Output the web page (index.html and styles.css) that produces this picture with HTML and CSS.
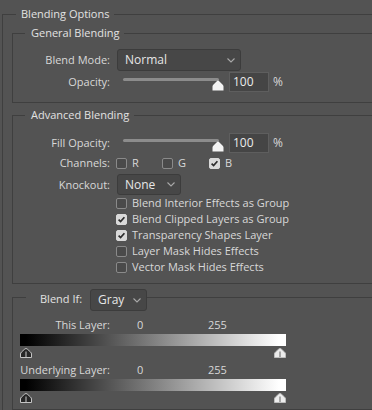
FILE: index.html
```html
<!DOCTYPE html>
<html>
  <head>
    <link rel="stylesheet" href="styles.css">
  </head>
  <body>
    <fieldset class="group outer">
      <legend>Blending Options</legend>

      <fieldset class="group general">
        <legend>General Blending</legend>
        <div class="row row-select">
          <span class="label">Blend Mode:</span>
          <div class="select mode">
            <span>Normal</span>
            <svg class="chev" width="8" height="5" viewBox="0 0 8 5"><path d="M0.5 0.5 L4 4 L7.5 0.5" fill="none" stroke="#a9a9a9" stroke-width="1.1" /></svg>
          </div>
        </div>
        <div class="row row-slider">
          <span class="label">Opacity:</span>
          <div class="slider">
            <div class="track"></div>
            <svg class="thumb" width="12" height="11" viewBox="0 0 12 11"><path d="M0.5 10.5 V6.5 Q0.5 5.5 1.5 4.5 L4.8 1.2 Q6 0 7.2 1.2 L10.5 4.5 Q11.5 5.5 11.5 6.5 V10.5 Z" fill="#f4f4f4" /></svg>
          </div>
          <div class="num">100</div>
          <span class="pct">%</span>
        </div>
      </fieldset>

      <fieldset class="group advanced">
        <legend>Advanced Blending</legend>
        <div class="row row-slider">
          <span class="label">Fill Opacity:</span>
          <div class="slider">
            <div class="track"></div>
            <svg class="thumb" width="12" height="11" viewBox="0 0 12 11"><path d="M0.5 10.5 V6.5 Q0.5 5.5 1.5 4.5 L4.8 1.2 Q6 0 7.2 1.2 L10.5 4.5 Q11.5 5.5 11.5 6.5 V10.5 Z" fill="#f4f4f4" /></svg>
          </div>
          <div class="num">100</div>
          <span class="pct">%</span>
        </div>
        <div class="row row-channels">
          <span class="label">Channels:</span>
          <div class="chan"><span class="box"></span>R</div>
          <div class="chan chan-g"><span class="box"></span>G</div>
          <div class="chan">
            <span class="box checked"><svg width="11" height="11" viewBox="0 0 11 11"><path d="M2.6 5.6 L4.6 7.6 L8.4 3.2" fill="none" stroke="#2c2c2c" stroke-width="1.7" /></svg></span>B
          </div>
        </div>
        <div class="row row-knockout">
          <span class="label">Knockout:</span>
          <div class="select knockout">
            <span>None</span>
            <svg class="chev" width="8" height="5" viewBox="0 0 8 5"><path d="M0.5 0.5 L4 4 L7.5 0.5" fill="none" stroke="#a9a9a9" stroke-width="1.1" /></svg>
          </div>
        </div>
        <div class="check-row"><span class="box"></span>Blend Interior Effects as Group</div>
        <div class="check-row">
          <span class="box checked"><svg width="11" height="11" viewBox="0 0 11 11"><path d="M2.6 5.6 L4.6 7.6 L8.4 3.2" fill="none" stroke="#2c2c2c" stroke-width="1.7" /></svg></span>Blend Clipped Layers as Group
        </div>
        <div class="check-row">
          <span class="box checked"><svg width="11" height="11" viewBox="0 0 11 11"><path d="M2.6 5.6 L4.6 7.6 L8.4 3.2" fill="none" stroke="#2c2c2c" stroke-width="1.7" /></svg></span>Transparency Shapes Layer
        </div>
        <div class="check-row"><span class="box"></span>Layer Mask Hides Effects</div>
        <div class="check-row"><span class="box"></span>Vector Mask Hides Effects</div>
      </fieldset>

      <fieldset class="group blendif">
        <legend>
          <span class="if-label">Blend If:</span>
          <div class="select gray">
            <span>Gray</span>
            <svg class="chev" width="8" height="5" viewBox="0 0 8 5"><path d="M0.5 0.5 L4 4 L7.5 0.5" fill="none" stroke="#a9a9a9" stroke-width="1.1" /></svg>
          </div>
        </legend>

        <div class="range-head">
          <span class="label">This Layer:</span>
          <span class="lo">0</span>
          <span class="hi">255</span>
        </div>
        <div class="ramp"></div>
        <div class="knobs">
          <svg width="12" height="10" viewBox="0 0 12 10"><path d="M0.5 9.5 V6 Q0.5 5 1.5 4 L4.8 1 Q6 0 7.2 1 L10.5 4 Q11.5 5 11.5 6 V9.5 Z" fill="#262626" stroke="#c4c4c4" /><path d="M6 3.5 V9" stroke="#9c9c9c" stroke-width="1.4" /></svg>
          <svg width="12" height="10" viewBox="0 0 12 10"><path d="M0.5 9.5 V6 Q0.5 5 1.5 4 L4.8 1 Q6 0 7.2 1 L10.5 4 Q11.5 5 11.5 6 V9.5 Z" fill="#ececec" stroke="#bdbdbd" /><path d="M6 3.5 V9" stroke="#8a8a8a" stroke-width="1.4" /></svg>
        </div>

        <div class="range-head second">
          <span class="label">Underlying Layer:</span>
          <span class="lo">0</span>
          <span class="hi">255</span>
        </div>
        <div class="ramp"></div>
        <div class="knobs">
          <svg width="12" height="10" viewBox="0 0 12 10"><path d="M0.5 9.5 V6 Q0.5 5 1.5 4 L4.8 1 Q6 0 7.2 1 L10.5 4 Q11.5 5 11.5 6 V9.5 Z" fill="#262626" stroke="#c4c4c4" /><path d="M6 3.5 V9" stroke="#9c9c9c" stroke-width="1.4" /></svg>
          <svg width="12" height="10" viewBox="0 0 12 10"><path d="M0.5 9.5 V6 Q0.5 5 1.5 4 L4.8 1 Q6 0 7.2 1 L10.5 4 Q11.5 5 11.5 6 V9.5 Z" fill="#ececec" stroke="#bdbdbd" /><path d="M6 3.5 V9" stroke="#8a8a8a" stroke-width="1.4" /></svg>
        </div>
      </fieldset>
    </fieldset>
  </body>
</html>
```

FILE: styles.css
```css
html,
body {
  margin: 0;
  overflow: hidden;
}
body {
  background-color: #535353;
  color: #d8d8d8;
  font-family: "Open Sans", "Noto Sans", sans-serif;
  font-size: 11px;
  line-height: 16px;
}
.group {
  border: 1px solid #3f3f3f;
  border-right: none;
  padding: 0;
  margin: 0;
  min-width: 0;
}
.group > legend {
  padding: 0 5px 0 6px;
  margin-left: 12px;
  line-height: 16px;
  color: #e2e2e2;
}
.outer {
  width: 370px;
  box-sizing: border-box;
  margin: 6px 0 0 2px;
  border-bottom: none;
}
.outer > legend {
  margin-left: 13px;
  padding: 0 5px 0 5px;
}
.general {
  margin: 3px 0 0 9px;
  padding: 8px 0 10px;
}
.advanced {
  margin: 4px 0 0 9px;
  padding: 9px 0 8px;
}
.blendif {
  margin: 5px 0 0 9px;
  padding: 12px 0 6px;
}

/* label column + control rows */
.row {
  display: flex;
  align-items: center;
}
.label {
  width: 97px;
  text-align: right;
  flex: none;
}
.row-select {
  height: 22px;
}
.row-slider {
  height: 20px;
  margin-top: 1px;
}
.row-channels {
  height: 18px;
  margin-top: 1px;
}
.row-knockout {
  height: 21px;
  margin-top: 2px;
}

.select {
  display: flex;
  align-items: center;
  box-sizing: border-box;
  height: 100%;
  margin-left: 7px;
  padding: 0 5px 0 7px;
  background-color: #474747;
  border: 1px solid #3c3c3c;
  border-radius: 3px;
  color: #e6e6e6;
  font-size: 12px;
}
.chev {
  margin-left: auto;
}
.mode {
  width: 124px;
}
.knockout {
  width: 64px;
}

.slider {
  position: relative;
  width: 96px;
  height: 20px;
  margin-left: 13px;
}
.track {
  margin-top: 6px;
  height: 3px;
  border-radius: 2px;
  background-color: #8c8c8c;
}
.thumb {
  position: absolute;
  top: 8px;
  left: calc(100% - 7px);
}
.num {
  box-sizing: border-box;
  width: 40px;
  height: 20px;
  margin-left: 10px;
  padding-left: 3px;
  line-height: 18px;
  background-color: #454545;
  border: 1px solid #5e5e5e;
  color: #ececec;
  font-size: 12px;
}
.pct {
  margin-left: 4px;
  font-size: 12px;
}

.box {
  display: inline-block;
  box-sizing: border-box;
  width: 11px;
  height: 11px;
  margin-right: 5px;
  border: 1px solid #8a8a8a;
  border-radius: 2px;
  background-color: #4a4a4a;
  flex: none;
}
.box.checked {
  border-color: #d9d9d9;
  background-color: #d9d9d9;
}
.box svg {
  display: block;
  margin: -1px;
}
.chan {
  display: flex;
  align-items: center;
  width: 46px;
}
.row-channels .chan:first-of-type {
  margin-left: 6px;
}
.chan-g {
  width: 47px;
}
.check-row {
  display: flex;
  align-items: center;
  height: 16px;
  padding-left: 103px;
}

/* blend if */
.blendif > legend {
  display: flex;
  align-items: flex-start;
  height: 16px;
  margin-left: 13px;
  padding: 0;
}
.if-label {
  padding-left: 14px;
  width: 47px;
  line-height: 20px;
}
.gray {
  width: 57px;
  height: 22px;
  margin-left: 3px;
}
.range-head {
  display: flex;
  height: 16px;
}
.range-head.second {
  margin-top: 4px;
}
.lo {
  margin-left: 27px;
  width: 71px;
}
.ramp {
  width: 266px;
  height: 12px;
  margin: 1px 0 0 7px;
  background: linear-gradient(to right, #000 0, #000 6px, #fff calc(100% - 7px), #fff 100%);
}
.knobs {
  display: flex;
  justify-content: space-between;
  width: 266px;
  height: 10px;
  margin: 2px 0 0 7px;
}
.knobs svg {
  display: block;
}
```
